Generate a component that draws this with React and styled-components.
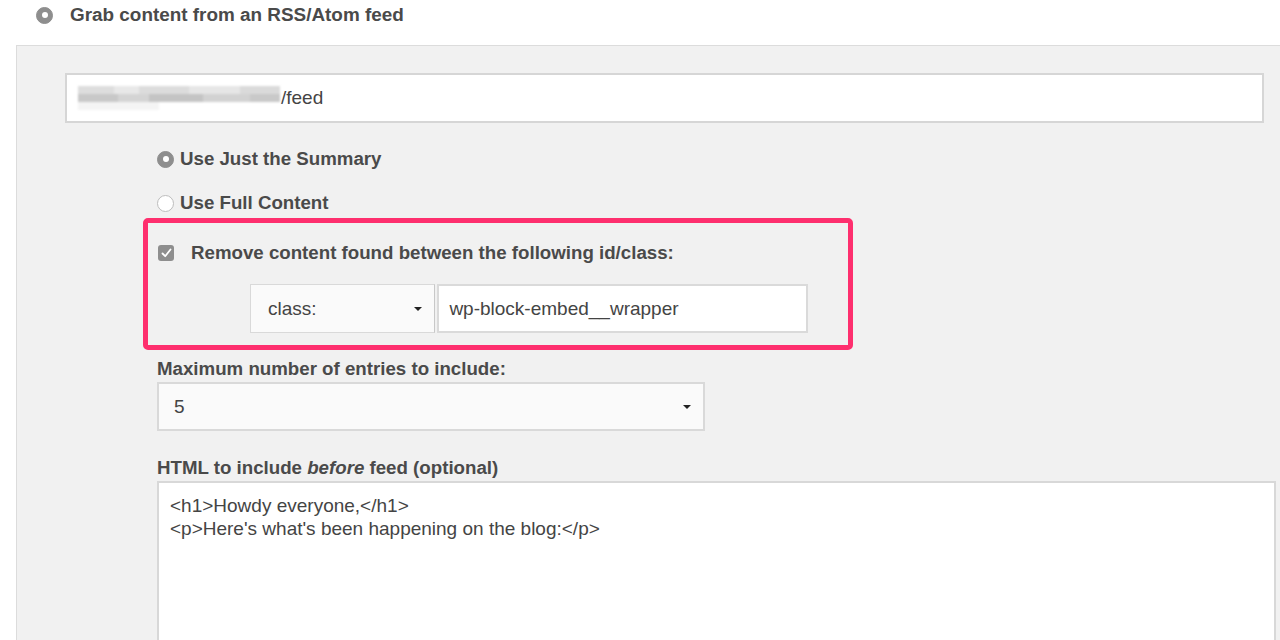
import styled, { createGlobalStyle } from "styled-components";

const GlobalStyle = createGlobalStyle`
  html, body {
    margin: 0;
    padding: 0;
    background: #fff;
    overflow: hidden;
  }
  body {
    font-family: "Liberation Sans", Arial, sans-serif;
    color: #444;
  }
`;

const Page = styled.div`
  width: 1280px;
  height: 640px;
  overflow: hidden;
`;

const Header = styled.div`
  display: flex;
  align-items: center;
  gap: 17px;
  height: 30px;
  padding-left: 36px;
  font-size: 18.9px;
  font-weight: 700;
  color: #4a4a4a;
`;

const Radio = styled.span`
  box-sizing: border-box;
  width: 17px;
  height: 17px;
  border-radius: 50%;
  flex-shrink: 0;
  display: inline-flex;
  align-items: center;
  justify-content: center;
  background: ${(p) => (p.$checked ? "#8e8e8e" : "#fff")};
  border: 1px solid ${(p) => (p.$checked ? "#8e8e8e" : "#bdbdbd")};
  &::after {
    content: "";
    width: 6px;
    height: 6px;
    border-radius: 50%;
    background: #fff;
    display: ${(p) => (p.$checked ? "block" : "none")};
  }
`;

const Panel = styled.div`
  margin: 15px 0 0 16px;
  width: 1400px;
  min-height: 620px;
  background: #f1f1f1;
  border-top: 1px solid #dcdcdc;
  border-left: 1px solid #dcdcdc;
  padding: 27px 0 0 48px;
  box-sizing: border-box;
`;

const UrlInput = styled.div`
  box-sizing: border-box;
  width: 1199px;
  height: 50px;
  background: #fff;
  border: 2px solid #d6d6d6;
  display: flex;
  align-items: center;
  padding-left: 11px;
  font-size: 19px;
  color: #444;
`;

const Blurred = styled.span`
  display: inline-flex;
  flex-direction: column;
  width: 202px;
  height: 24px;
  margin-right: 1px;
  filter: blur(1px);
`;

const BlurRow = styled.span`
  flex: 1;
  background: ${(p) => p.$bg};
`;

const Options = styled.div`
  padding-left: 92px;
  display: flex;
  flex-direction: column;
`;

const RadioRow = styled.label`
  display: flex;
  align-items: center;
  gap: 6px;
  height: 44px;
  font-size: 18.7px;
  font-weight: 700;
  color: #4a4a4a;
  &:first-child {
    margin-top: 14px;
  }
`;

const Highlight = styled.div`
  margin: -7px 0 0 -14px;
  width: 710px;
  box-sizing: border-box;
  border: 5px solid #fe2f6e;
  border-radius: 5px;
  padding: 16px 40px 12px 10px;
`;

const CheckRow = styled.div`
  display: flex;
  align-items: center;
  gap: 17px;
  height: 28px;
  font-size: 18.7px;
  font-weight: 700;
  color: #4a4a4a;
`;

const CheckBox = styled.span`
  width: 16px;
  height: 16px;
  border-radius: 3px;
  background: #8e8e8e;
  display: inline-flex;
  align-items: center;
  justify-content: center;
  flex-shrink: 0;
`;

const Pair = styled.div`
  display: flex;
  gap: 2px;
  margin: 17px 0 0 92px;
`;

const Select = styled.div`
  box-sizing: border-box;
  width: ${(p) => p.$w}px;
  height: 49px;
  background: #fafafa;
  border: 1px solid #d9d9d9;
  border-right-color: ${(p) => (p.$dark ? "#c8c8c8" : "#d9d9d9")};
  display: flex;
  align-items: center;
  justify-content: space-between;
  padding: 0 12px 0 17px;
  font-size: 19px;
  color: #444;
`;

const Caret = styled.span`
  width: 0;
  height: 0;
  border-left: 4px solid transparent;
  border-right: 4px solid transparent;
  border-top: 4px solid #222;
`;

const TextInput = styled.div`
  box-sizing: border-box;
  width: 372px;
  height: 49px;
  background: #fff;
  border: 2px solid #dadada;
  display: flex;
  align-items: center;
  padding-left: 10px;
  font-size: 19px;
  color: #444;
`;

const FieldLabel = styled.div`
  font-size: 18.7px;
  font-weight: 700;
  color: #4a4a4a;
  margin-top: ${(p) => p.$top}px;
  height: 22px;
  line-height: 22px;
  em {
    font-style: italic;
  }
`;

const SelectWide = styled(Select)`
  margin-top: 2px;
  border-width: 2px;
  padding-left: 15px;
  padding-right: 12px;
  background: #fafafa;
`;

const TextArea = styled.div`
  box-sizing: border-box;
  margin-top: 2px;
  width: 1119px;
  height: 200px;
  background: #fff;
  border: 2px solid #d8d8d8;
  padding: 11px 11px;
  font-size: 19px;
  line-height: 23px;
  color: #444;
  white-space: pre;
`;

export default function App() {
  return (
    <Page>
      <GlobalStyle />
      <Header>
        <Radio $checked />
        Grab content from an RSS/Atom feed
      </Header>
      <Panel>
        <UrlInput>
          <Blurred>
            <BlurRow $bg="linear-gradient(90deg, #ddd 0 18%, #e8e8e8 18% 30%, #dcdcdc 30% 55%, #e6e6e6 55% 80%, #dadada 80%)" />
            <BlurRow $bg="linear-gradient(90deg, #c8c8c8 0 20%, #d4d4d4 20% 35%, #c4c4c4 35% 62%, #d2d2d2 62% 85%, #c9c9c9 85%)" />
            <BlurRow $bg="linear-gradient(90deg, #f4f4f4 0 40%, #fff 40%)" />
          </Blurred>
          /feed
        </UrlInput>
        <Options>
          <RadioRow>
            <Radio $checked />
            Use Just the Summary
          </RadioRow>
          <RadioRow>
            <Radio />
            Use Full Content
          </RadioRow>
          <Highlight>
            <CheckRow>
              <CheckBox>
                <svg width="11" height="10" viewBox="0 0 11 10">
                  <path d="M1.5 5.5 L4.2 8.2 L9.5 1.5" fill="none" stroke="#fff" strokeWidth="1.8" strokeLinecap="round" strokeLinejoin="round" />
                </svg>
              </CheckBox>
              Remove content found between the following id/class:
            </CheckRow>
            <Pair>
              <Select $w={186} $dark>
                class:
                <Caret />
              </Select>
              <TextInput>wp-block-embed__wrapper</TextInput>
            </Pair>
          </Highlight>
          <FieldLabel $top={8}>Maximum number of entries to include:</FieldLabel>
          <SelectWide $w={548}>
            5
            <Caret />
          </SelectWide>
          <FieldLabel $top={26}>
            HTML to include <em>before</em> feed (optional)
          </FieldLabel>
          <TextArea>{"<h1>Howdy everyone,</h1>\n<p>Here's what's been happening on the blog:</p>"}</TextArea>
        </Options>
      </Panel>
    </Page>
  );
}
